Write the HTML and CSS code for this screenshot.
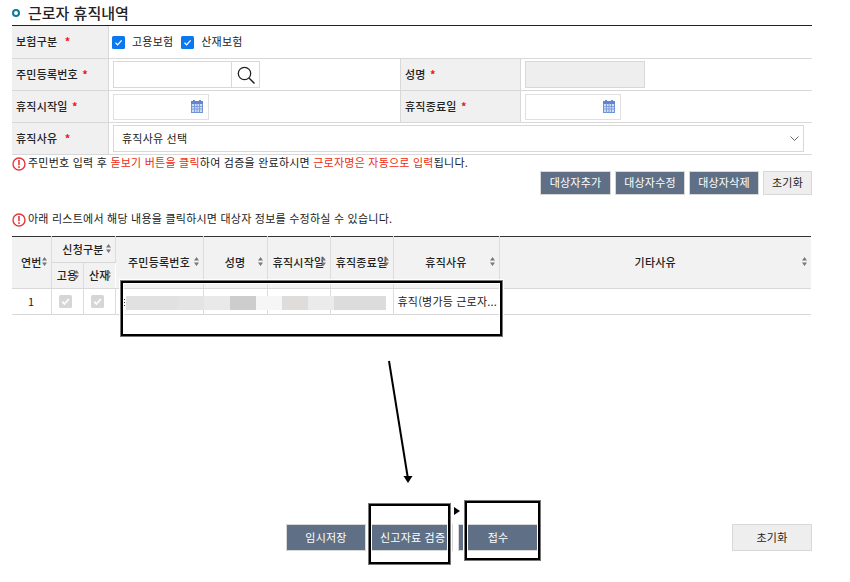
FILE: index.html
```html
<!DOCTYPE html>
<html lang="ko">
<head>
<meta charset="utf-8">
<title>근로자 휴직내역</title>
<link rel="stylesheet" href="styles.css">
</head>
<body>
<svg class="defs" width="0" height="0" aria-hidden="true">
  <defs>
    <symbol id="cal" viewBox="0 0 12 13">
      <rect x="0.5" y="1.5" width="11" height="11" fill="#cfdcf2" stroke="#6f93d6"/>
      <rect x="0" y="1" width="12" height="3" fill="#5f86cf"/>
      <rect x="2" y="0" width="2" height="3" fill="#5f86cf"/>
      <rect x="8" y="0" width="2" height="3" fill="#5f86cf"/>
      <path d="M3.5 4v8M6 4v8M8.5 4v8M1 6.5h10M1 9h10" stroke="#7f9edb" stroke-width="1" fill="none"/>
    </symbol>
    <symbol id="sort" viewBox="0 0 5 9">
      <path d="M2.5 0 5 3.6H0Z M2.5 9 0 5.4H5Z" fill="#777"/>
    </symbol>
    <symbol id="warn" viewBox="0 0 14 14">
      <circle cx="7" cy="7" r="6" fill="#fff" stroke="#e8353a" stroke-width="1.4"/>
      <rect x="6.2" y="3" width="1.6" height="5.2" fill="#e8353a"/>
      <rect x="6.2" y="9.2" width="1.6" height="1.7" fill="#e8353a"/>
    </symbol>
    <symbol id="tick" viewBox="0 0 13 13">
      <rect width="13" height="13" rx="1.5" fill="#0b78f0"/>
      <path d="M3.5 6.8 5.6 8.8 9.6 4.4" fill="none" stroke="#fff" stroke-width="1.2"/>
    </symbol>
    <symbol id="tick-off" viewBox="0 0 13 13">
      <rect width="13" height="13" rx="1.5" fill="#d6d6d6"/>
      <path d="M3.2 6.6 5.5 9 9.8 4" fill="none" stroke="#fff" stroke-width="1.6"/>
    </symbol>
  </defs>
</svg>

<main class="page">
  <h2 class="title"><span class="bullet"></span>근로자 휴직내역</h2>

  <div class="form">
    <div class="row">
      <div class="label">보험구분 <b class="req">&nbsp;*</b></div>
      <div class="cell wide checks">
        <svg class="check"><use href="#tick"/></svg><span class="check-text">고용보험</span>
        <svg class="check"><use href="#tick"/></svg><span class="check-text">산재보험</span>
      </div>
    </div>
    <div class="row">
      <div class="label">주민등록번호 <b class="req">*</b></div>
      <div class="cell mid">
        <div class="search">
          <div class="search-input"></div>
          <div class="search-btn">
            <svg width="18" height="18" viewBox="0 0 18 18"><circle cx="7.5" cy="7.5" r="6.2" fill="none" stroke="#222" stroke-width="1.3"/><path d="M12 12 17.5 17.5" stroke="#222" stroke-width="1.5"/></svg>
          </div>
        </div>
      </div>
      <div class="label">성명 <b class="req">*</b></div>
      <div class="cell last"><div class="readonly"></div></div>
    </div>
    <div class="row">
      <div class="label">휴직시작일 <b class="req">*</b></div>
      <div class="cell mid"><div class="date"><svg class="cal"><use href="#cal"/></svg></div></div>
      <div class="label">휴직종료일 <b class="req">*</b></div>
      <div class="cell last"><div class="date"><svg class="cal"><use href="#cal"/></svg></div></div>
    </div>
    <div class="row">
      <div class="label">휴직사유 <b class="req">&nbsp;*</b></div>
      <div class="cell wide">
        <div class="select">휴직사유 선택
          <svg class="chev" width="9" height="5" viewBox="0 0 9 5"><path d="M.5.5 4.5 4.5 8.5.5" fill="none" stroke="#666" stroke-width="1"/></svg>
        </div>
      </div>
    </div>
  </div>

  <p class="note first"><svg class="warn"><use href="#warn"/></svg>주민번호 입력 후 <em>돋보기 버튼을 클릭</em>하여 검증을 완료하시면 <em>근로자명은 자동으로 입력</em>됩니다.</p>

  <div class="actions">
    <button class="btn dark wider">대상자추가</button>
    <button class="btn dark">대상자수정</button>
    <button class="btn dark">대상자삭제</button>
    <button class="btn light">초기화</button>
  </div>

  <p class="note second"><svg class="warn"><use href="#warn"/></svg>아래 리스트에서 해당 내용을 클릭하시면 대상자 정보를 수정하실 수 있습니다.</p>

  <div class="grid-wrap">
    <table class="grid">
      <colgroup>
        <col class="c-no"><col class="c-chk"><col class="c-chk"><col class="c-id"><col class="c-name"><col class="c-date"><col class="c-date"><col class="c-reason"><col>
      </colgroup>
      <thead>
        <tr>
          <th rowspan="2">연번<svg class="sort"><use href="#sort"/></svg></th>
          <th colspan="2" class="group">신청구분<svg class="sort"><use href="#sort"/></svg></th>
          <th rowspan="2">주민등록번호<svg class="sort"><use href="#sort"/></svg></th>
          <th rowspan="2">성명<svg class="sort"><use href="#sort"/></svg></th>
          <th rowspan="2">휴직시작일<svg class="sort"><use href="#sort"/></svg></th>
          <th rowspan="2">휴직종료일<svg class="sort"><use href="#sort"/></svg></th>
          <th rowspan="2">휴직사유<svg class="sort"><use href="#sort"/></svg></th>
          <th rowspan="2">기타사유<svg class="sort"><use href="#sort"/></svg></th>
        </tr>
        <tr>
          <th>고용<svg class="sort"><use href="#sort"/></svg></th>
          <th>산재<svg class="sort"><use href="#sort"/></svg></th>
        </tr>
      </thead>
      <tbody>
        <tr>
          <td class="text-cell">1</td>
          <td class="tick-cell"><svg class="check"><use href="#tick-off"/></svg></td>
          <td class="tick-cell"><svg class="check"><use href="#tick-off"/></svg></td>
          <td></td><td></td><td></td><td></td>
          <td class="reason">휴직(병가등 근로자...</td>
          <td></td>
        </tr>
      </tbody>
    </table>
    <div class="masked"></div>
    <div class="mark mark-table"></div>
  </div>

  <div class="footer">
    <button class="btn dark foot save">임시저장</button>
    <button class="btn dark foot verify">신고자료 검증</button>
    <button class="btn dark foot submit">접수</button>
    <button class="btn light foot reset">초기화</button>
    <div class="mark mark-verify"></div>
    <div class="mark mark-submit"></div>
    <svg class="flow-arrow" width="10" height="10" viewBox="0 0 10 10"><path d="M2 1 8 5 2 9Z" fill="#000"/></svg>
    <svg class="down-arrow" width="30" height="125" viewBox="0 0 30 125"><path d="M2 2 21 120" stroke="#000" stroke-width="2" fill="none"/><path d="M16.5 117H25.5L21 124Z" fill="#000"/></svg>
  </div>
</main>
</body>
</html>
```
FILE: styles.css
```css
* { box-sizing: border-box; }
html, body { margin: 0; padding: 0; background: #fff; }
body {
  font-family: "Noto Sans CJK KR", "Noto Sans", sans-serif;
  font-size: 11px;
  letter-spacing: 0.2px;
  color: #222;
  height: 582px;
  overflow: hidden;
}
.defs { position: absolute; }
.page { width: 800px; margin-left: 12px; padding-top: 3px; }

.title {
  display: flex;
  align-items: center;
  height: 20px;
  margin: 0 0 2px;
  font-size: 15px;
  font-weight: 500;
  letter-spacing: 0;
  line-height: 20px;
  color: #222;
}
.bullet {
  width: 8px;
  height: 8px;
  margin-right: 8px;
  border: 2px solid #0f7a96;
  border-radius: 50%;
}

.form { border-top: 1px solid #222; }
.row {
  display: flex;
  height: 32px;
  border-bottom: 1px solid #d8d8d8;
}
.row:first-child { height: 33px; }
.label {
  display: flex;
  align-items: center;
  width: 97px;
  padding: 0 0 2px 4px;
  background: #f0f0f0;
  border-right: 1px solid #d8d8d8;
  font-weight: 500;
  white-space: pre;
}
.row .label + .cell.mid + .label { width: 121px; border-left: 1px solid #d8d8d8; }
.req { color: #f01020; font-weight: 700; margin-left: 1px; }
.cell { display: flex; align-items: center; padding-left: 4px; }
.wide { width: 703px; }
.mid { width: 291px; }
.last { width: 291px; }
.checks { padding-left: 3px; }
.check { width: 13px; height: 13px; flex: none; }
.check-text { margin: 0 8px 2px 7px; }

.search { display: flex; width: 147px; height: 27px; border: 1px solid #d8d8d8; }
.search-input { width: 118px; border-right: 1px solid #d8d8d8; }
.search-btn { flex: 1; display: flex; align-items: center; justify-content: center; }
.readonly { width: 120px; height: 27px; background: #eee; border: 1px solid #d8d8d8; }
.date {
  display: flex;
  align-items: center;
  justify-content: flex-end;
  width: 96px;
  height: 26px;
  padding-right: 5px;
  border: 1px solid #e0e0e0;
}
.cal { width: 12px; height: 13px; }
.select {
  position: relative;
  display: flex;
  align-items: center;
  width: 691px;
  height: 27px;
  padding: 0 0 2px 8px;
  border: 1px solid #d8d8d8;
}
.chev { position: absolute; right: 4px; top: 10px; }

.note {
  display: flex;
  align-items: flex-start;
  margin: 0;
  height: 15px;
  line-height: 13px;
  letter-spacing: 0.23px;
  white-space: pre;
}
.note em { font-style: normal; color: #f02a10; }
.warn { width: 14px; height: 14px; margin: 1px 2px 0 0; flex: none; }
.first { margin-top: 1px; }
.second { margin-top: 17px; }

.actions { display: flex; justify-content: flex-end; gap: 4px; }
.btn {
  height: 24px;
  padding: 0 0 2px;
  font: inherit;
  letter-spacing: inherit;
  border: 1px solid #d8d8d8;
  cursor: pointer;
}
.btn.dark { width: 70px; background: #5f7086; color: #fff; }
.btn.wider { width: 71px; }
.btn.light { width: 49px; background: #eee; color: #222; }

.grid-wrap { position: relative; margin-top: 9px; width: 800px; }
.grid {
  width: 799px;
  table-layout: fixed;
  border-collapse: collapse;
  border-top: 1px solid #333;
}
.c-no { width: 39px; }
.c-chk { width: 32px; }
.c-id { width: 88px; }
.c-name { width: 64px; }
.c-date { width: 63px; }
.c-reason { width: 106px; }
.grid th {
  position: relative;
  height: 26px;
  padding: 0 0 2px;
  background: #f2f2f2;
  font-weight: 500;
  text-align: center;
  white-space: nowrap;
  border-right: 1px solid #dcdcdc;
  border-bottom: 1px solid #d8d8d8;
}
.grid th:last-child { border-right: 0; }
.sort { position: absolute; right: 4px; top: 50%; width: 5px; height: 9px; margin-top: -6px; }
.grid td {
  height: 26px;
  padding: 0;
  text-align: center;
  border-right: 1px solid #dcdcdc;
  border-bottom: 1px solid #d8d8d8;
}
.grid td:last-child { border-right: 0; }
.grid td.text-cell { padding-bottom: 2px; }
.grid td.tick-cell { padding-right: 3px; }
.grid td .check { display: block; margin: 0 auto; }
.grid td.reason {
  padding: 0 4px 2px;
  text-align: left;
  white-space: nowrap;
}
.masked {
  position: absolute;
  left: 114px;
  top: 60px;
  width: 260px;
  height: 14px;
  background: linear-gradient(90deg,
    #e1e1e1 0 52px, #e4e4e4 52px 78px, #e9e9e9 78px 104px,
    #cdcdcd 104px 130px, #f6f6f6 130px 156px, #dedddc 156px 182px,
    #ebebeb 182px 208px, #dcdcdc 208px 260px);
}
.masked::before {
  content: "";
  position: absolute;
  left: -3px;
  top: 3px;
  width: 2px;
  height: 7px;
  background: repeating-linear-gradient(180deg, #333 0 1px, #fff 1px 3px);
}

.mark {
  position: absolute;
  border: 2px solid #000;
  outline: 1px solid #777;
  box-shadow: 0 0 0 2px #fff, inset 0 0 0 1px #fff;
}
.mark-table { left: 109px; top: 45px; width: 381px; height: 55px; }

.footer {
  position: relative;
  display: flex;
  height: 27px;
  margin-top: 209px;
  padding-left: 274px;
}
.btn.foot { height: 27px; width: 80px; flex: none; }
.footer .verify { margin-left: 5px; width: 82px; text-align: left; padding-left: 8px; }
.footer .submit { margin-left: 5px; width: 80px; }
.footer .reset { margin-left: auto; width: 80px; }
.mark-verify { left: 357px; top: -20px; width: 81px; height: 60px; }
.mark-submit { left: 453px; top: -23px; width: 75px; height: 59px; }
.flow-arrow { position: absolute; left: 440px; top: -18px; }
.down-arrow { position: absolute; left: 375px; top: -165px; }
```
